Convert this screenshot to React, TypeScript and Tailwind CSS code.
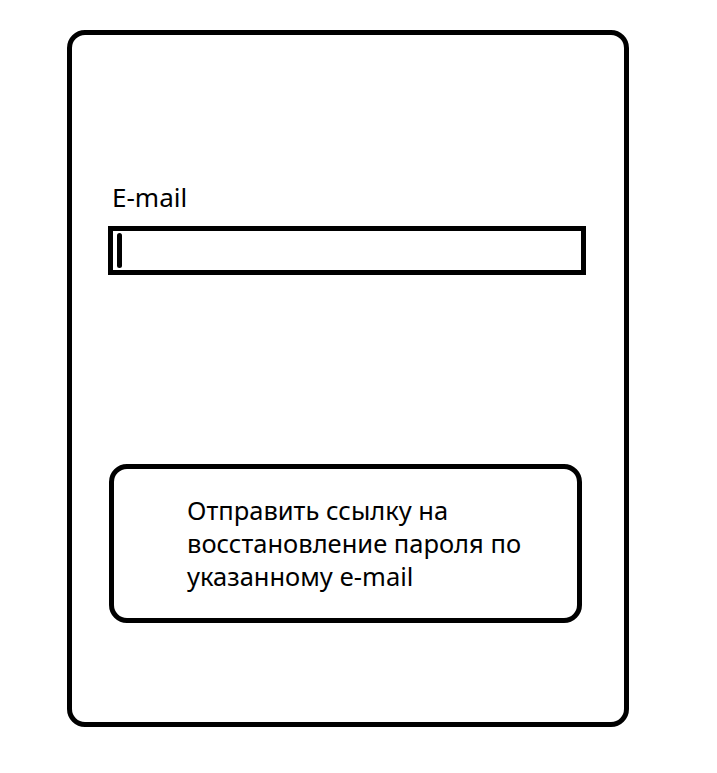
export default function App() {
    return (
        <div className="w-[717px] h-[773px] bg-white pt-[30px] pl-[67px]" style={{ fontFamily: '"Noto Sans", "DejaVu Sans", sans-serif' }}>
            <div className="w-[562px] h-[697px] border-[5px] border-black rounded-[18px] flex flex-col">
                {/* E-mail field */}
                <label className="ml-[40px] mt-[147px] text-[26px] leading-[30px] text-black">E-mail</label>
                <div className="ml-[36px] mt-[14px] w-[478px] h-[49px] border-[5px] border-black flex items-center pl-[4px]">
                    <div className="w-[5px] h-[35px] bg-black rounded-full" />
                </div>

                {/* Send link button */}
                <button className="ml-[37px] mt-[189px] w-[473px] h-[159px] border-[5px] border-black rounded-[18px] flex items-center pl-[73px] text-left">
                    <span className="text-[25.5px] leading-[33px] text-black">
                        Отправить ссылку на<br />
                        восстановление пароля по<br />
                        указанному e-mail
                    </span>
                </button>
            </div>
        </div>
    )
}
